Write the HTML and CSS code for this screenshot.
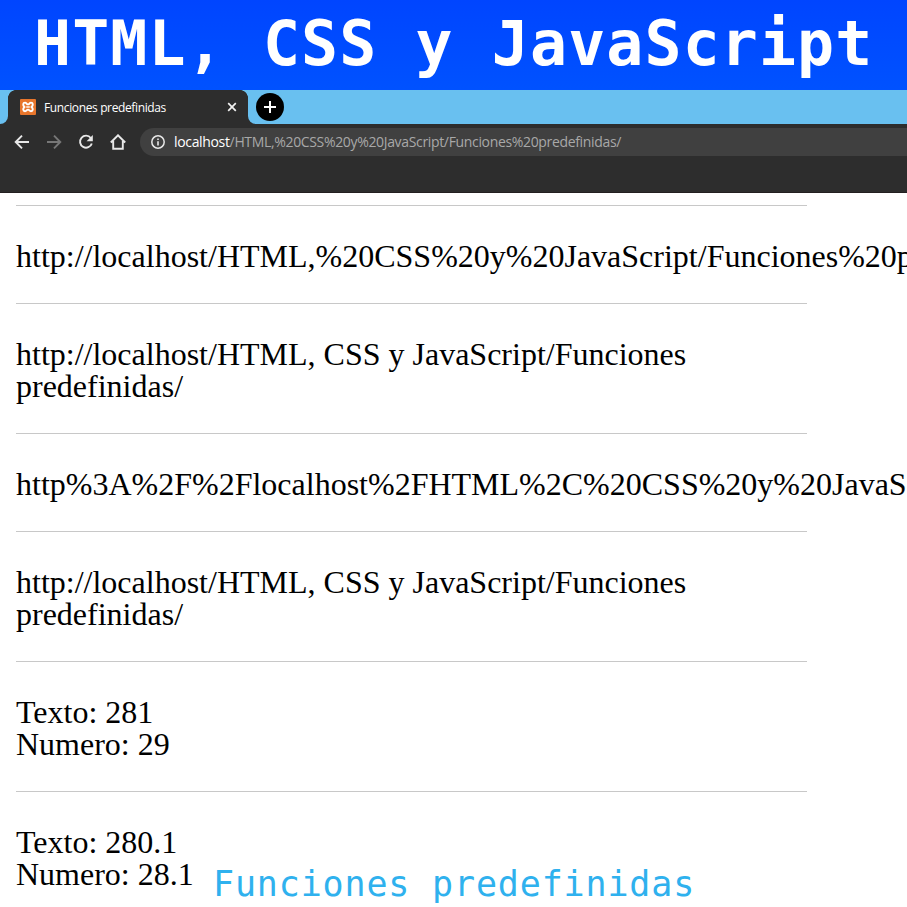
FILE: index.html
```html
<!DOCTYPE html>
<html lang="es">
<head>
<meta charset="utf-8">
<title>Funciones predefinidas</title>
<link rel="stylesheet" href="styles.css">
</head>
<body>
<header class="banner"><h1>HTML, CSS y JavaScript</h1></header>
<div class="browser">
  <div class="tabstrip">
    <div class="corner left"></div>
    <div class="tab">
      <svg class="favicon" viewBox="0 0 16 16"><rect width="16" height="16" rx="1" fill="#e8762c"/><path d="M5 3.6C2.9 3.6 2.6 6.4 4.4 8C2.6 9.6 2.9 12.2 5 12.2C6.6 12.2 6.6 10.6 8 10.6S9.4 12.2 11 12.2C13.1 12.2 13.4 9.6 11.6 8C13.4 6.4 13.1 3.6 11 3.6C9.4 3.6 9.4 5.4 8 5.4S6.6 3.6 5 3.6Z" fill="none" stroke="#fff" stroke-width="1.9"/><path d="M6.2 8h3.6" stroke="#fff" stroke-width="1.4"/></svg>
      <span class="tab-title">Funciones predefinidas</span>
      <svg class="close" viewBox="0 0 10 10"><path d="M1.2 1.2l7.6 7.6M8.8 1.2l-7.6 7.6" stroke="#f2f2f2" stroke-width="1.7"/></svg>
    </div>
    <div class="corner right"></div>
    <div class="newtab"><svg viewBox="0 0 28 28"><path d="M14 8v12M8 14h12" stroke="#fff" stroke-width="2"/></svg></div>
  </div>
  <div class="toolbar">
    <svg class="nav" viewBox="0 0 16 16"><path d="M15 8H2.3M8 1.7L1.7 8L8 14.3" /></svg>
    <svg class="nav dim" viewBox="0 0 16 16"><path d="M1 8h12.7M8 1.7L14.3 8L8 14.3" /></svg>
    <svg class="nav" viewBox="0 0 16 16"><path d="M12.8 4A6 6 0 1 0 13.8 9.4"/><path d="M14.8 1v6.2H8.6z" class="solid"/></svg>
    <svg class="nav" viewBox="0 0 16 16"><path d="M.8 8.5L8 1.3l7.2 7.2M3.2 7v7.8h9.6V7"/></svg>
    <div class="omnibox">
      <svg class="info" viewBox="0 0 14 14"><circle cx="7" cy="7" r="6.2" fill="none" stroke="#e8e8e8" stroke-width="1.5"/><path d="M7 6.2v4.3M7 3.4v1.6" stroke="#e8e8e8" stroke-width="1.6"/></svg>
      <span class="url"><span class="host">localhost</span><span class="path">/HTML,%20CSS%20y%20JavaScript/Funciones%20predefinidas/</span></span>
    </div>
  </div>
</div>
<main class="page">
  <p class="wide">http://localhost/HTML,%20CSS%20y%20JavaScript/Funciones%20predefinidas/</p>
  <p>http://localhost/HTML, CSS y JavaScript/Funciones predefinidas/</p>
  <p class="wide">http%3A%2F%2Flocalhost%2FHTML%2C%20CSS%20y%20JavaScript%2FFunciones%20predefinidas%2F</p>
  <p>http://localhost/HTML, CSS y JavaScript/Funciones predefinidas/</p>
  <p>Texto: 281<br>Numero: 29</p>
  <p>Texto: 280.1<br>Numero: 28.1</p>
</main>
<div class="caption">Funciones predefinidas</div>
</body>
</html>
```
FILE: styles.css
```css
* { box-sizing: border-box; }
body { margin: 0; height: 907px; overflow: hidden; position: relative; background: #fff; }
.banner { height: 90px; background: linear-gradient(#0045ff, #0052ff); overflow: hidden; }
.banner h1 {
  margin: 0; padding-left: 34px; white-space: pre; color: #fff;
  font: bold 61.5px/88px "DejaVu Sans Mono", monospace; letter-spacing: 1.13px;
}
.browser { height: 103px; background: #2d2d2d; border-bottom: 1px solid #231f20; font-family: "Open Sans", "Noto Sans", sans-serif; }
.tabstrip { height: 34px; display: flex; background: #2d2d2d; }
.corner { width: 8px; background: #69c0f0; }
.corner.left { border-bottom-right-radius: 8px; }
.corner.right { border-bottom-left-radius: 8px; }
.tab {
  width: 240px; padding: 0 11px 0 12px; display: flex; align-items: center;
  color: #fff; position: relative;
}
.tab::before, .tab::after { content: ""; position: absolute; top: 0; width: 8px; height: 8px; }
.tab::before { left: 0; background: radial-gradient(circle at 8px 8px, transparent 7.6px, #69c0f0 8.2px); }
.tab::after { right: 0; background: radial-gradient(circle at 0 8px, transparent 7.6px, #69c0f0 8.2px); }
.favicon { width: 16px; height: 16px; margin-right: 8px; }
.tab-title { font-size: 12px; letter-spacing: -.37px; flex: 1; white-space: nowrap; }
.close { width: 10px; height: 10px; }
.newtab { flex: 1; background: #69c0f0; display: flex; align-items: center; }
.newtab svg { width: 28px; height: 28px; border-radius: 50%; background: #000; }
.toolbar { height: 36px; display: flex; align-items: center; padding-left: 14px; gap: 16px; }
.nav { width: 16px; height: 16px; flex: none; fill: none; stroke: #e8e8e8; stroke-width: 1.9; }
.nav .solid { fill: #e8e8e8; stroke: none; }
.dim { stroke: #777; }
.omnibox {
  flex: 1; height: 28px; margin-left: -2px; padding-left: 11px; background: #404040;
  border-radius: 14px 0 0 14px; display: flex; align-items: center; gap: 9px;
}
.info { width: 14px; height: 14px; flex: none; }
.url { font-size: 14px; line-height: 28px; letter-spacing: -.34px; white-space: nowrap; }
.host { color: #fff; }
.path { color: #a8a8a8; }
.page { margin-top: 12px; padding-left: 16px; width: 807px; font: 32px/32px "Liberation Serif", serif; color: #000; }
.page p { margin: 0; padding: 34px 0 31px; border-top: 1px solid #c8c8c8; }
.page .wide { white-space: nowrap; }
.caption {
  position: absolute; left: 213px; top: 863px; white-space: pre; color: #2fb1ee;
  font: 35px/42px "DejaVu Sans Mono", monospace; letter-spacing: .84px;
}
```
